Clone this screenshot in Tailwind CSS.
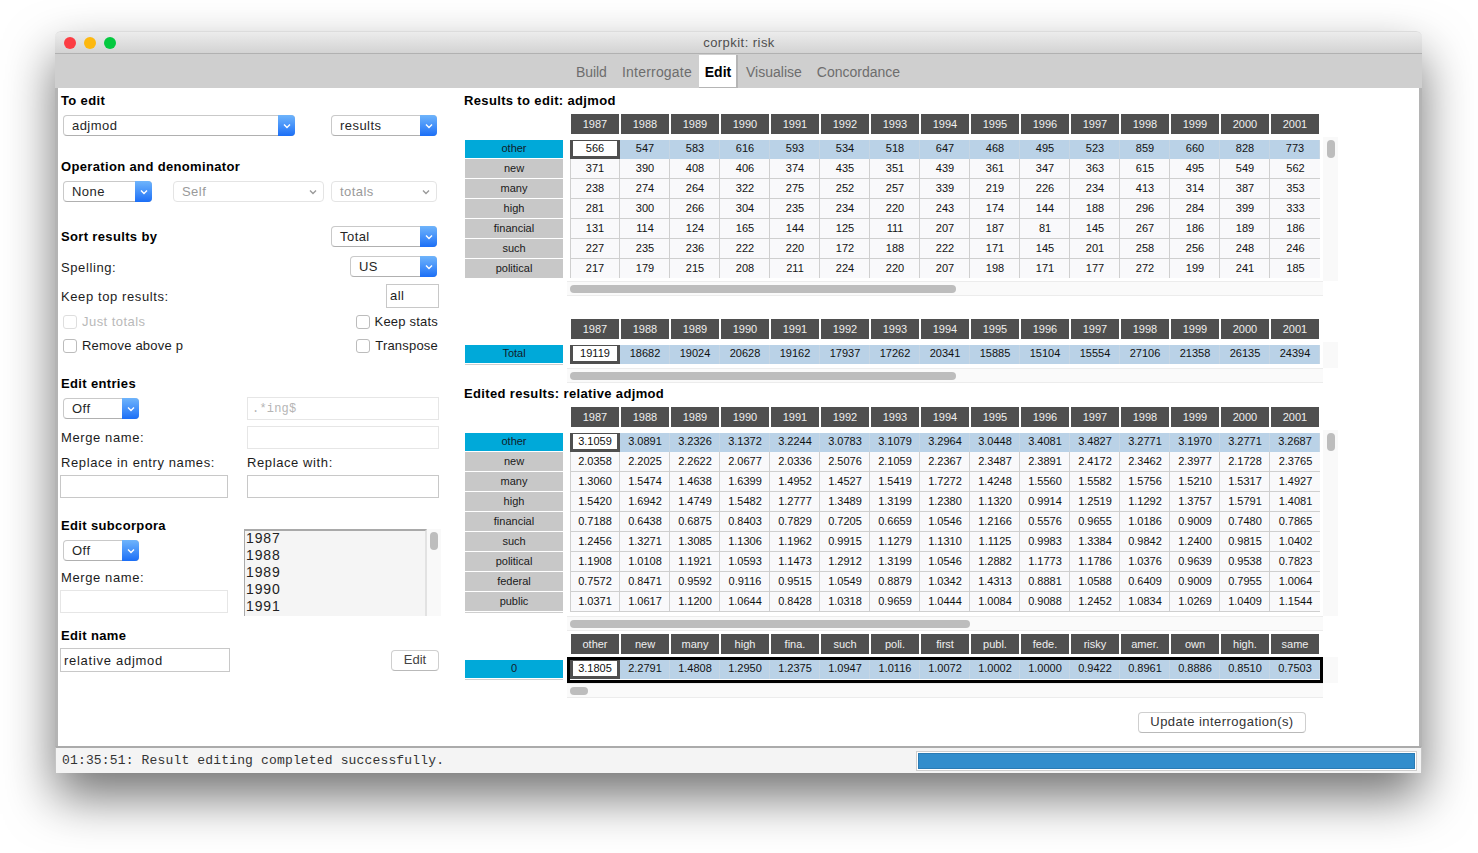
<!DOCTYPE html>
<html lang="en">
<head>
    <meta charset="UTF-8">
    <title>corpkit: risk</title>
    <script src="https://cdn.jsdelivr.net/npm/@tailwindcss/browser@4"></script>
</head>
<body class="bg-white pl-[55px] pt-[31px] font-['Liberation_Sans',sans-serif] overflow-hidden h-[853px]">
<div class="w-[1367px] h-[742px] rounded-t-[6px] bg-white flex flex-col shadow-[0_24px_50px_rgba(0,0,0,0.55)]">
    <!-- title bar -->
    <div class="h-[23px] shrink-0 rounded-t-[6px] bg-gradient-to-b from-[#ececec] to-[#d3d3d3] border-b border-[#b1b1b1] border-t border-t-[#dcdcdc] flex items-center pl-[9px]">
        <span class="w-[12px] h-[12px] rounded-full bg-[#fc3d44]"></span>
        <span class="w-[12px] h-[12px] rounded-full bg-[#fdb80f] ml-[8px]"></span>
        <span class="w-[12px] h-[12px] rounded-full bg-[#04c93f] ml-[8px]"></span>
        <span class="w-[1246px] text-center text-[13px] text-[#4f4f4f] tracking-[0.45px]">corpkit: risk</span>
    </div>
    <!-- tabs -->
    <div class="h-[34px] shrink-0 bg-[#cfcfcf] flex text-[14px] text-[#6d6d6d] pl-[521px]">
        <span class="mt-[8px] w-[31px] tracking-[-0.1px]">Build</span>
        <span class="mt-[8px] ml-[15px] w-[69px] tracking-[0.2px]">Interrogate</span>
        <span class="h-[33px] mt-[1px] ml-[8px] w-[39px] bg-white border-r-2 border-b border-[#b5b5b5] text-center pt-[7px] pl-px font-bold text-black">Edit</span>
        <span class="mt-[8px] ml-[8px]">Visualise</span>
        <span class="mt-[8px] ml-[15px]">Concordance</span>
    </div>
    <!-- main -->
    <div class="h-[658px] shrink-0 flex border-x-[3px] border-[#b4b4b4] bg-white text-[13px] text-[#1c1c1c] tracking-[0.45px]">
        <div id="left" class="w-[381px] pl-[2px] shrink-0"></div>
        <div id="right" class="ml-[25px] w-[900px] text-[11px] tracking-normal text-[#111]"></div>
    </div>
    <!-- status -->
    <div class="h-[27px] shrink-0 border-t-2 border-[#ababab] bg-[#f4f4f4] flex items-center justify-between pl-[6px] pr-[4px] border-x border-x-[#c4c4c4]">
        <span class="font-['Liberation_Mono',monospace] text-[13px] text-[#333] tracking-[0.16px]">01:35:51: Result editing completed successfully.</span>
        <div class="w-[501px] h-[20px] border border-[#cfcfcf] bg-white p-px"><div class="h-full bg-[#318dcc] border border-[#2a7bb4]"></div></div>
    </div>
</div>

<script>
    const chevron = (color) => `<svg width="8" height="6" viewBox="0 0 8 6" fill="none"><path d="M1 1.5 L4 4.5 L7 1.5" stroke="${color}" stroke-width="1.4"/></svg>`;

    function select(text, widthClass, disabled) {
        if (disabled) {
            return `<div class="${widthClass} h-[21px] border border-[#e4e4e4] rounded-[4px] bg-white flex items-center justify-between pl-[8px] pr-[6px] text-[#9a9a9a]"><span>${text}</span>${chevron('#9a9a9a')}</div>`;
        }
        return `<div class="${widthClass} h-[21px] border border-[#c9c9c9] border-b-[#b0b0b0] rounded-[4px] bg-white flex items-center justify-between pl-[8px] text-[#262626]"><span>${text}</span><div class="w-[17px] h-[21px] -mr-px rounded-r-[4px] bg-gradient-to-b from-[#6fb4fb] to-[#1b6ef6] flex items-center justify-center">${chevron('#ffffff')}</div></div>`;
    }
    const heading = (text, mt) => `<div class="h-[18px] ${mt} ml-px pt-[2px] flex items-center font-bold text-black tracking-[0.35px]">${text}</div>`;
    const checkbox = (text, disabled) => `<div class="flex items-center gap-[5px] ${disabled ? 'text-[#b9b9b9] tracking-[0.45px]' : 'tracking-[0.2px]'}"><span class="w-[14px] h-[14px] rounded-[3px] border bg-white ${disabled ? 'border-[#dedede]' : 'border-[#bcbcbc]'}"></span><span>${text}</span></div>`;
    const entry = (widthClass, border, content) => `<div class="${widthClass} h-[23px] border ${border} flex items-center bg-white pl-[3px]">${content || ''}</div>`;
    const label = (text) => `<span class="pt-[2px] tracking-[0.6px]">${text}</span>`;

    document.getElementById('left').innerHTML = `
        ${heading('To edit', 'mt-[3px]')}
        <div class="mt-[6px] flex justify-between ml-[3px] mr-[2px]">${select('adjmod', 'w-[232px]')}${select('results', 'w-[106px]')}</div>
        ${heading('Operation and denominator', 'mt-[21px]')}
        <div class="mt-[6px] flex ml-[3px] mr-[2px]">${select('None', 'w-[89px]')}<div class="ml-[21px]">${select('Self', 'w-[151px]', true)}</div><div class="ml-[7px]">${select('totals', 'w-[106px]', true)}</div></div>
        <div class="mt-[24px] h-[21px] flex justify-between items-center ml-px mr-[2px]"><span class="font-bold text-black tracking-[0.35px]">Sort results by</span>${select('Total', 'w-[106px]')}</div>
        <div class="mt-[9px] h-[21px] flex justify-between items-center ml-px mr-[2px]">${label('Spelling:')}${select('US', 'w-[87px]')}</div>
        <div class="mt-[7px] h-[24px] flex justify-between items-center ml-px">${label('Keep top results:')}<div class="w-[53px] h-[24px] border border-[#c8c8c8] pl-[3px] flex items-center">all</div></div>
        <div class="mt-[6px] h-[16px] flex justify-between ml-[3px] mr-px">${checkbox('Just totals', true)}${checkbox('Keep stats')}</div>
        <div class="mt-[8px] h-[16px] flex justify-between ml-[3px] mr-px">${checkbox('Remove above p')}${checkbox('Transpose')}</div>
        ${heading('Edit entries', 'mt-[20px]')}
        <div class="mt-[5px] h-[23px] flex justify-between items-center ml-[3px]">${select('Off', 'w-[76px]')}${entry('w-[192px]', 'border-[#e6e6e6]', '<span class="font-[\'Liberation_Mono\',monospace] text-[12px] text-[#b5b5b5] pl-px tracking-[0.2px]">.*ing$</span>')}</div>
        <div class="mt-[6px] h-[23px] flex justify-between items-center ml-px"><span class="tracking-[0.6px]">Merge name:</span>${entry('w-[192px]', 'border-[#e6e6e6]')}</div>
        <div class="mt-[4px] h-[18px] flex items-center ml-px"><span class="w-[186px] pt-px tracking-[0.6px]">Replace in entry names:</span><span class="pt-px tracking-[0.6px]">Replace with:</span></div>
        <div class="mt-[4px] flex justify-between">${entry('w-[168px]', 'border-[#c8c8c8]')}${entry('w-[192px]', 'border-[#c8c8c8]')}</div>
        <div class="mt-[18px] flex h-[100px]">
            <div class="w-[184px] shrink-0">
                ${heading('Edit subcorpora', '')}
                <div class="mt-[6px] ml-[3px]">${select('Off', 'w-[76px]')}</div>
                <div class="mt-[7px] h-[18px] flex items-center ml-px">${label('Merge name:')}</div>
                <div class="mt-[4px]">${entry('w-[168px]', 'border-[#e6e6e6]')}</div>
            </div>
            <div class="mt-[13px] h-[87px] flex overflow-hidden shrink-0">
                <div class="w-[183px] bg-[#f5f5f5] border-t-2 border-l border-r-2 border-t-[#a9a9a9] border-l-[#a9a9a9] border-r-[#e2e2e2] pl-px text-[14px] leading-[17px] tracking-[0.9px] text-[#222]">
                    <div class="-mt-px">1987</div><div>1988</div><div>1989</div><div>1990</div><div>1991</div>
                </div>
                <div class="w-[14px] bg-[#f9f9f9] pt-[3px] pl-[3px]"><div class="w-[8px] h-[18px] rounded-full bg-[#bdbdbd]"></div></div>
            </div>
        </div>
        ${heading('Edit name', 'mt-[10px]')}
        <div class="mt-[4px] h-[24px] flex justify-between items-center">
            <div class="w-[170px] h-[24px] border border-[#c8c8c8] flex items-center pl-[3px] pt-px tracking-[0.72px]">relative adjmod</div>
            <div class="w-[48px] h-[21px] border border-[#cfcfcf] border-b-[#b9b9b9] rounded-[4px] flex items-center justify-center text-[#444] tracking-normal">Edit</div>
        </div>`;

    const years = ['1987','1988','1989','1990','1991','1992','1993','1994','1995','1996','1997','1998','1999','2000','2001'];
    const tables = [
        {head: years, bodyH: 'h-[144px]', thumb: 'w-[386px]', vthumb: true, rows: [
            ['other','566 547 583 616 593 534 518 647 468 495 523 859 660 828 773'],
            ['new','371 390 408 406 374 435 351 439 361 347 363 615 495 549 562'],
            ['many','238 274 264 322 275 252 257 339 219 226 234 413 314 387 353'],
            ['high','281 300 266 304 235 234 220 243 174 144 188 296 284 399 333'],
            ['financial','131 114 124 165 144 125 111 207 187 81 145 267 186 189 186'],
            ['such','227 235 236 222 220 172 188 222 171 145 201 258 256 248 246'],
            ['political','217 179 215 208 211 224 220 207 198 171 177 272 199 241 185'],
        ]},
        {head: years, bodyH: 'h-[26px]', thumb: 'w-[386px]', headMt: 'mt-[23px]', rows: [
            ['Total','19119 18682 19024 20628 19162 17937 17262 20341 15885 15104 15554 27106 21358 26135 24394'],
        ], line: true},
        {title: 'Edited results: relative adjmod', titleMt: 'mt-[1px]', headMt: 'mt-[5px]', head: years, bodyH: 'h-[186px]', thumb: 'w-[400px]', vthumb: true, line: true, rows: [
            ['other','3.1059 3.0891 3.2326 3.1372 3.2244 3.0783 3.1079 3.2964 3.0448 3.4081 3.4827 3.2771 3.1970 3.2771 3.2687'],
            ['new','2.0358 2.2025 2.2622 2.0677 2.0336 2.5076 2.1059 2.2367 2.3487 2.3891 2.4172 2.3462 2.3977 2.1728 2.3765'],
            ['many','1.3060 1.5474 1.4638 1.6399 1.4952 1.4527 1.5419 1.7272 1.4248 1.5560 1.5582 1.5756 1.5210 1.5317 1.4927'],
            ['high','1.5420 1.6942 1.4749 1.5482 1.2777 1.3489 1.3199 1.2380 1.1320 0.9914 1.2519 1.1292 1.3757 1.5791 1.4081'],
            ['financial','0.7188 0.6438 0.6875 0.8403 0.7829 0.7205 0.6659 1.0546 1.2166 0.5576 0.9655 1.0186 0.9009 0.7480 0.7865'],
            ['such','1.2456 1.3271 1.3085 1.1306 1.1962 0.9915 1.1279 1.1310 1.1125 0.9983 1.3384 0.9842 1.2400 0.9815 1.0402'],
            ['political','1.1908 1.0108 1.1921 1.0593 1.1473 1.2912 1.3199 1.0546 1.2882 1.1773 1.1786 1.0376 0.9639 0.9538 0.7823'],
            ['federal','0.7572 0.8471 0.9592 0.9116 0.9515 1.0549 0.8879 1.0342 1.4313 0.8881 1.0588 0.6409 0.9009 0.7955 1.0064'],
            ['public','1.0371 1.0617 1.1200 1.0644 0.8428 1.0318 0.9659 1.0444 1.0084 0.9088 1.2452 1.0834 1.0269 1.0409 1.1544'],
        ]},
        {head: 'other new many high fina. such poli. first publ. fede. risky amer. own high. same'.split(' '), headMt: 'mt-[3px]', bodyH: 'h-[26px]', thumb: 'w-[18px]', focus: true, line: true, rows: [
            ['0','3.1805 2.2791 1.4808 1.2950 1.2375 1.0947 1.0116 1.0072 1.0002 1.0000 0.9422 0.8961 0.8886 0.8510 0.7503'],
        ]},
    ];

    function firstRow(values) {
        return `<div class="flex h-[19px] bg-[#bad2e7]">` + values.map((v, i) => i === 0
            ? `<div class="w-[50px] h-[19px] shrink-0 border-[3px] border-t border-[#4f4f4f] bg-white flex items-center justify-center">${v}</div>`
            : `<div class="w-[50px] h-[19px] shrink-0 border-r border-[#c6d6e4] flex items-center justify-center pb-[2px] pl-px">${v}</div>`).join('') + `</div>`;
    }
    function bodyRow(values, last, line) {
        const h = last && !line ? 'h-[19px]' : 'h-[20px]';
        const b = last && !line ? '' : 'border-b border-[#cfcfcf]';
        return `<div class="flex ${h} ${b} bg-[#f9f9fb] border-l border-[#cfcfcf]">` + values.map((v, i) =>
            `<div class="${i === 0 ? 'w-[49px]' : 'w-[50px] pl-px'} shrink-0 ${i === values.length - 1 ? '' : 'border-r border-[#cfcfcf]'} flex items-center justify-center pb-px">${v}</div>`).join('') + `</div>`;
    }

    function renderTable(t) {
        const labels = t.rows.map((r, i) => i === 0
            ? `<div class="h-[18px] pb-[2px] bg-[#00a9d9] flex items-center justify-center text-[#10202a]">${r[0]}</div>`
            : `<div class="h-[19px] mt-px bg-[#c8c8c8] flex items-center justify-center text-[#1a1a1a]">${r[0]}</div>`).join('');
        const rows = t.rows.map((r, i) => {
            const values = r[1].split(' ');
            return i === 0 ? firstRow(values) : bodyRow(values, i === t.rows.length - 1, t.line);
        }).join('');
        const mid = t.focus
            ? `<div class="w-[756px] h-[26px] border-[3px] border-black overflow-hidden">${rows}</div>`
            : `<div class="w-[756px] pl-[3px] pr-[3px] pt-[3px]">${rows}</div>`;
        return `
        ${t.title ? `<div class="${t.titleMt} h-[18px] pt-[2px] flex items-center font-bold text-[13px] text-black tracking-[0.35px]">${t.title}</div>` : ''}
        <div class="${t.headMt || 'mt-[5px]'} ml-[107px] flex gap-[2px]">${t.head.map(h => `<div class="w-[48px] h-[20px] bg-[#4f4f4f] text-[#f0f0f0] flex items-center justify-center">${h}</div>`).join('')}</div>
        <div class="mt-[3px] flex ${t.bodyH}">
            <div class="w-[98px] ml-px pt-[3px] shrink-0">${labels}${t.line ? '<div class="h-px mt-px bg-[#cfcfcf]"></div>' : ''}</div>
            <div class="ml-[4px] shrink-0">${mid}</div>
            <div class="w-[15px] bg-[#f9f9f9] pt-[3px] pl-[4px]">${t.vthumb ? '<div class="w-[8px] h-[18px] rounded-full bg-[#bdbdbd]"></div>' : ''}</div>
        </div>
        <div class="ml-[103px] w-[756px] h-[15px] bg-[#fafafa] border-y border-[#ececec] pt-[3px] pl-[3px]"><div class="${t.thumb} h-[8px] rounded-full bg-[#bdbdbd]"></div></div>`;
    }

    document.getElementById('right').innerHTML =
        `<div class="mt-[3px] h-[18px] pt-[2px] flex items-center font-bold text-[13px] text-black tracking-[0.35px]">Results to edit: adjmod</div>`
        + tables.map(renderTable).join('')
        + `<div class="mt-[14px] ml-[674px] w-[168px] h-[21px] pb-[2px] border border-[#cfcfcf] border-b-[#b9b9b9] rounded-[4px] flex items-center justify-center text-[13px] text-[#333] tracking-[0.45px]">Update interrogation(s)</div>`;
</script>
</body>
</html>
